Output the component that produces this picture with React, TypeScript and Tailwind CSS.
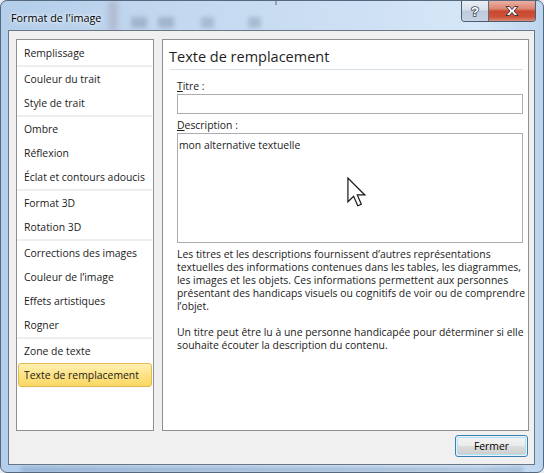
import React from "react";

const items: (string | null)[] = [
  "Remplissage",
  null,
  "Couleur du trait",
  "Style de trait",
  null,
  "Ombre",
  "Réflexion",
  "Éclat et contours adoucis",
  null,
  "Format 3D",
  "Rotation 3D",
  null,
  "Corrections des images",
  "Couleur de l’image",
  "Effets artistiques",
  "Rogner",
  null,
  "Zone de texte",
];

const para1 = [
  "Les titres et les descriptions fournissent d’autres représentations",
  "textuelles des informations contenues dans les tables, les diagrammes,",
  "les images et les objets. Ces informations permettent aux personnes",
  "présentant des handicaps visuels ou cognitifs de voir ou de comprendre",
  "l’objet.",
];
const para2 = [
  "Un titre peut être lu à une personne handicapée pour déterminer si elle",
  "souhaite écouter la description du contenu.",
];

export default function App() {
  return (
    <div className="w-[544px] h-[473px] relative overflow-hidden bg-[#e8ecf1] font-['Open_Sans',sans-serif] text-[10.4px] text-[#1b1b1b]">
      <div className="absolute inset-0 rounded-[7px] border border-[#56687e] bg-[linear-gradient(90deg,#b3cdea_0%,#c2d8ef_30%,#cfe1f4_70%,#d6e7f7_88%,#bcd5ee_100%)] flex flex-col pl-[7px] pr-[8px] pb-[7px] pt-[29px] overflow-hidden">
        {/* blurred background shapes behind the glass */}
        <div className="absolute left-[108px] top-0 w-[8px] h-[30px] bg-[#a7a3b6] blur-[3px] opacity-60" />
        <div className="absolute left-[130px] top-[16px] w-[16px] h-[11px] bg-[#93a8c0] blur-[2px] opacity-70" />
        <div className="absolute left-[157px] top-[16px] w-[16px] h-[11px] bg-[#93a8c0] blur-[2px] opacity-70" />
        <div className="absolute left-[200px] top-[16px] w-[13px] h-[11px] bg-[#93a8c0] blur-[2px] opacity-60" />
        <div className="absolute left-[247px] top-[16px] w-[13px] h-[11px] bg-[#93a8c0] blur-[2px] opacity-60" />
        <div className="absolute left-[274px] top-0 w-[2px] h-[4px] bg-[#7d8aa0] opacity-70" />
        <div className="absolute left-[20px] right-[20px] bottom-[1px] h-[3px] bg-[#5f7fa6] blur-[2px] opacity-60" />

        {/* title */}
        <div className="absolute left-[10px] top-[9px] text-[10.8px] leading-[16px] text-black [text-shadow:0_0_6px_#ffffff,0_0_3px_#ffffff]">
          Format de l'image
        </div>

        {/* caption buttons */}
        <div className="absolute left-[460px] top-0 flex h-[21px] rounded-b-[4px] border border-t-0 border-[#4c5d73] overflow-hidden">
          <div className="w-[27px] h-full flex items-center justify-center bg-[linear-gradient(180deg,#e8eef5_0%,#d6e0eb_45%,#bdcbdc_50%,#c6d3e2_100%)] border-r border-[#5d6b7c]">
            <svg width="12" height="14" viewBox="0 0 12 14">
              <text x="6" y="12" textAnchor="middle" fontSize="13" fontWeight="700" fontFamily="Liberation Sans, sans-serif" fill="#ffffff" stroke="#3d4a5a" strokeWidth="1.6" paintOrder="stroke">?</text>
            </svg>
          </div>
          <div className="w-[46px] h-full flex items-center justify-center bg-[linear-gradient(180deg,#eab0a3_0%,#dc8370_40%,#c9492f_50%,#cc5139_80%,#dc8a74_100%)]">
            <svg width="16" height="12" viewBox="0 0 16 12">
              <path d="M2 1.5 H5.5 L8 4.5 L10.5 1.5 H14 L10 6 L14 10.5 H10.5 L8 7.5 L5.5 10.5 H2 L6 6 Z" fill="#ffffff" stroke="#3e3a3a" strokeWidth="1" strokeLinejoin="round" />
            </svg>
          </div>
        </div>

        {/* client area */}
        <div className="relative flex-1 flex flex-col bg-[#f0f0f0] border border-[#6b7684] pl-[7px] pr-[5px] pt-[8px] pb-[7px]">
          <div className="flex h-[392px] gap-[8px]">
            {/* left list */}
            <div className="w-[138px] h-full bg-white border border-[#8d8f94] pt-px flex flex-col">
              {items.map((it, i) =>
                it === null ? (
                  <div key={i} className="h-[2px] mr-px bg-[#eeeef2]" />
                ) : (
                  <div key={i} className="h-[24px] flex items-center pl-[7px] pt-[2px] whitespace-nowrap">
                    {it}
                  </div>
                )
              )}
              <div className="h-[24px] mx-px flex items-center pl-[5px] pt-[1px] whitespace-nowrap rounded-[3px] border border-[#e2b850] bg-[linear-gradient(180deg,#fff0b4_0%,#fde48a_45%,#fbd865_100%)]">
                Texte de remplacement
              </div>
            </div>

            {/* right panel */}
            <div className="w-[367px] h-full bg-white border border-[#8d8f94] flex flex-col">
              <div className="pt-[7px] pl-[6px] text-[14.5px] leading-[19px] text-[#1e1e1e] whitespace-nowrap">
                Texte de remplacement
              </div>
              <div className="mt-[3px] ml-[7px] mr-[5px] h-px bg-[#d9e1e8]" />
              <div className="pl-[14px] pr-[5px] flex flex-col">
                <div className="mt-[7px] leading-[16px] pt-px">
                  <span className="underline">T</span>itre :
                </div>
                <div className="h-[20px] border border-[#abadb3] bg-white" />
                <div className="mt-[2px] leading-[16px] pt-px">
                  <span className="underline">D</span>escription :
                </div>
                <div className="h-[110px] border border-[#abadb3] bg-white pl-[1px] pt-[3px] leading-[16px]">
                  mon alternative textuelle
                </div>
                <div className="mt-[5px] leading-[13px] whitespace-nowrap">
                  {para1.map((l, i) => (
                    <div key={i}>{l}</div>
                  ))}
                  <div className="h-[13px]" />
                  {para2.map((l, i) => (
                    <div key={i}>{l}</div>
                  ))}
                </div>
              </div>
            </div>
          </div>

          <div className="flex justify-end mt-[4px] pr-px">
            <div className="w-[73px] h-[22px] rounded-[3px] border border-[#3c7fb1] p-px">
              <div className="w-full h-full rounded-[2px] border border-[#a8e3fb] bg-[linear-gradient(180deg,#f2f2f2_0%,#ebebeb_50%,#dddddd_51%,#cfcfcf_100%)] flex items-center justify-center text-black leading-none">
                Fermer
              </div>
            </div>
          </div>
        </div>
      </div>

      {/* mouse pointer */}
      <svg className="absolute left-[347px] top-[177px]" width="20" height="31" viewBox="0 0 13 20">
        <path d="M0.6 0.6 L0.6 16 L4.3 12.4 L7 18.6 L9.3 17.6 L6.7 11.6 L11.6 11.6 Z" fill="#ffffff" stroke="#1a1a1a" strokeWidth="0.8" strokeLinejoin="miter" />
      </svg>
    </div>
  );
}
